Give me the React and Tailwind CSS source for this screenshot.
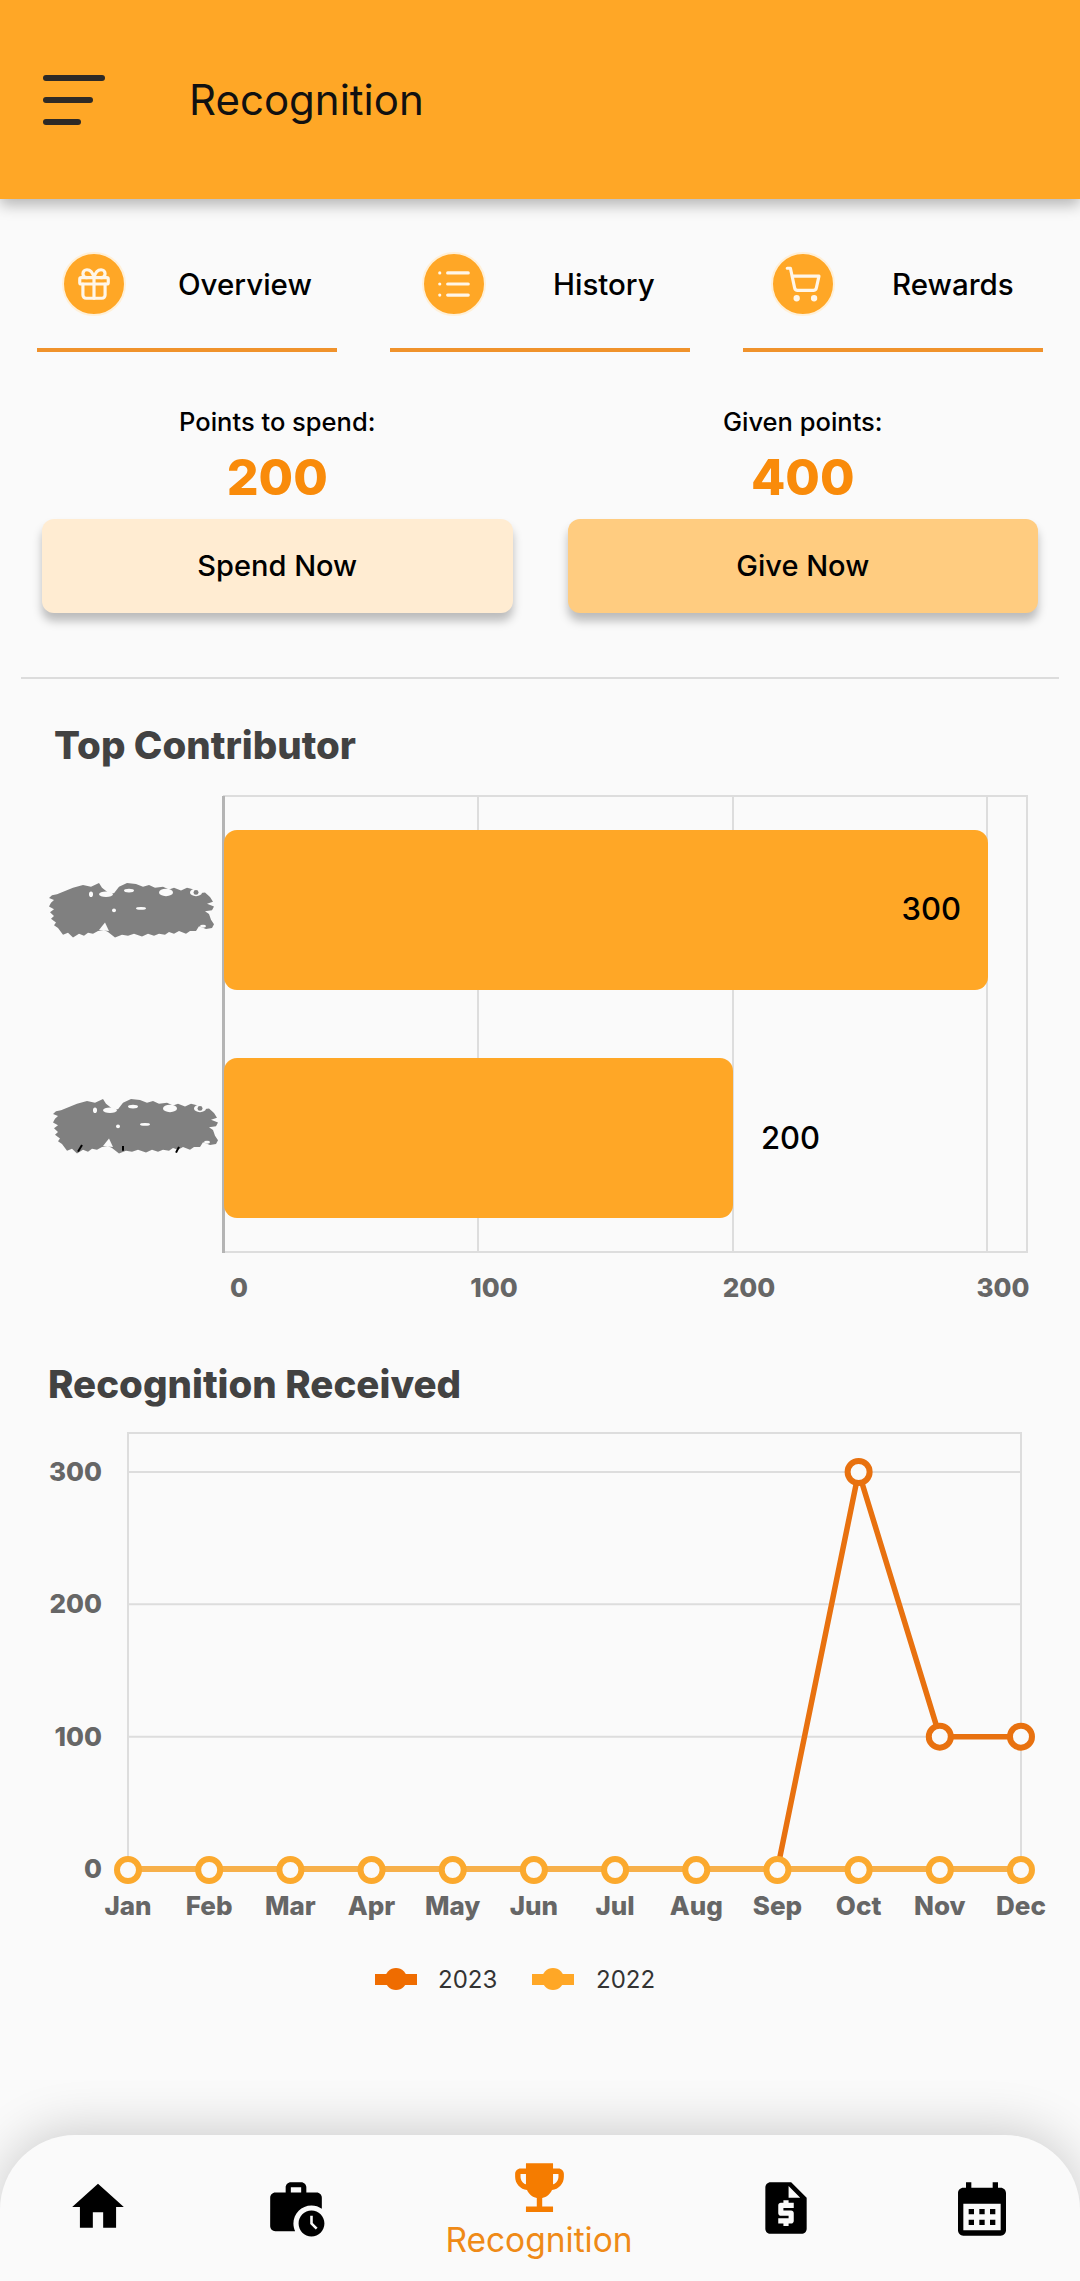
import { Gift, List, ShoppingCart } from "lucide-react";

const tabs = [
  { label: "Overview", Icon: Gift, pad: "pl-[25px]", gap: "ml-[52px]" },
  { label: "History", Icon: List, pad: "pl-[32px]", gap: "ml-[67px]" },
  { label: "Rewards", Icon: ShoppingCart, pad: "pl-[28px]", gap: "ml-[57px]" },
];

const months = ["Jan", "Feb", "Mar", "Apr", "May", "Jun", "Jul", "Aug", "Sep", "Oct", "Nov", "Dec"];
const monthX = (i) => 128 + i * 81.18;
const valueY = (v) => 1869 - (v / 300) * 397;

const series2023 = [0, 0, 0, 0, 0, 0, 0, 0, 0, 300, 100, 100];

function Redacted({ x, y, specks }) {
  return (
    <g transform={`translate(${x} ${y}) scale(1 0.94)`}>
      <path
        fill="#808080"
        d="M6 5l10-3 8 2 8-4 3 5 6 5 6 1 5-7 8-4 9 1 7 3 6-2 6 3 8-1 6 3 5-2 7 3 6-3 7 2 5 4 6-1 5 5 3 5-6 2 7 3-2 4-7 1 4 3 2 6 3 5-2 4-6 1-7-3-3 5-6 0-4 3-7-3-5 3-5-2-4 3-6-1-5 2-6-2-6 3-8-3-6 2-6-1-7 3-7-6-4-2-6 1-5 3-5-1-4 3-5-2-6 4-5-5-5 2-5-7-4-3 2-3-5-4 3-3-4-4 4-3-5-3 2-4 3-3-5-2 3-3 5-1z"
      />
      <g fill="#fafafa">
        <ellipse cx="39" cy="12" rx="7" ry="3" />
        <ellipse cx="62" cy="8" rx="5" ry="2" />
        <ellipse cx="99" cy="10" rx="7" ry="4" />
        <ellipse cx="129" cy="10" rx="6" ry="4" />
        <ellipse cx="147" cy="11" rx="3" ry="2" />
        <ellipse cx="24" cy="12" rx="2" ry="3" />
        <circle cx="47" cy="29" r="2" />
        <ellipse cx="74" cy="27" rx="5" ry="1.5" />
        <ellipse cx="136" cy="46" rx="3" ry="1.5" />
        <path d="M32 50l6-8 4 9z" />
      </g>
      <circle cx="129" cy="10" r="2.5" fill="#808080" />
      {specks}
    </g>
  );
}

function TopContributorChart() {
  const gridX = [478, 733, 987];
  const ticks = [
    ["0", 239],
    ["100", 494],
    ["200", 749],
    ["300", 1003],
  ];
  return (
    <svg viewBox="0 780 1080 530" className="mt-[13px] block h-[530px] w-[1080px] shrink-0">
      <rect x="224" y="796" width="803" height="456" fill="none" stroke="#dddddd" strokeWidth="2" />
      {gridX.map((x) => (
        <line key={x} x1={x} x2={x} y1="796" y2="1252" stroke="#dddddd" strokeWidth="2" />
      ))}
      <line x1="223.5" x2="223.5" y1="796" y2="1253" stroke="#b4b4b4" strokeWidth="3" />
      <rect x="224" y="830" width="764" height="160" rx="13" fill="#ffa726" />
      <rect x="224" y="1058" width="509" height="160" rx="13" fill="#ffa726" />
      <text x="961" y="920" textAnchor="end" fontSize="31" fontWeight="500" fill="#000">300</text>
      <text x="820" y="1149" textAnchor="end" fontSize="31" fontWeight="500" fill="#000">200</text>
      <Redacted x={67} y={883} />
      <Redacted
        x={71}
        y={1099}
        specks={
          <g stroke="#000" strokeWidth="2">
            <line x1="11" y1="49" x2="7" y2="56" />
            <line x1="108" y1="51" x2="105" y2="57" />
            <line x1="52" y1="50" x2="52" y2="55" />
          </g>
        }
      />
      {ticks.map(([t, x]) => (
        <text key={t} x={x} y="1297" textAnchor="middle" fontSize="26" fontWeight="800" fill="#666666">{t}</text>
      ))}
    </svg>
  );
}

function RecognitionChart() {
  const line2023 = series2023.map((v, i) => `${monthX(i)},${valueY(v)}`).join(" ");
  return (
    <svg viewBox="0 1420 1080 590" className="mt-[14px] block h-[590px] w-[1080px] shrink-0">
      <rect x="128" y="1433" width="893" height="436" fill="none" stroke="#dddddd" strokeWidth="2" />
      {[300, 200, 100].map((v) => (
        <g key={v}>
          <line x1="128" x2="1021" y1={valueY(v)} y2={valueY(v)} stroke="#dddddd" strokeWidth="2" />
          <text x="102" y={valueY(v) + 9} textAnchor="end" fontSize="26" fontWeight="800" fill="#666666">{v}</text>
        </g>
      ))}
      <text x="102" y="1878" textAnchor="end" fontSize="26" fontWeight="800" fill="#666666">0</text>
      <polyline points={line2023} fill="none" stroke="#e8710f" strokeWidth="5.5" />
      {series2023.slice(9).map((v, i) => (
        <circle key={i} cx={monthX(i + 9)} cy={valueY(v)} r="11" fill="#fafafa" stroke="#e8710f" strokeWidth="6" />
      ))}
      <line x1="128" x2="1021" y1="1869" y2="1869" stroke="#f7b04a" strokeWidth="6" />
      {months.map((m, i) => (
        <g key={m}>
          <circle cx={monthX(i)} cy="1870" r="11" fill="#fafafa" stroke="#fba92e" strokeWidth="6" />
          <text x={monthX(i)} y="1915" textAnchor="middle" fontSize="26" fontWeight="800" fill="#666666">{m}</text>
        </g>
      ))}
      <rect x="375" y="1974" width="42" height="11" fill="#ef6c00" />
      <circle cx="396" cy="1979" r="11" fill="#ef6c00" />
      <text x="438" y="1988" fontSize="24" fill="#333333">2023</text>
      <rect x="532" y="1974" width="42" height="11" fill="#ffa726" />
      <circle cx="553" cy="1979" r="11" fill="#ffa726" />
      <text x="596" y="1988" fontSize="24" fill="#333333">2022</text>
    </svg>
  );
}

function NavIcon({ size, color = "#000", paths }) {
  return (
    <svg viewBox="0 0 24 24" width={size} height={size} fill={color}>
      {paths.map((d) => (
        <path key={d} d={d} />
      ))}
    </svg>
  );
}

const homePath = "M10 20v-6h4v6h5v-8h3L12 3 2 12h3v8z";
const workHistoryPaths = [
  "M18 11c1.49 0 2.87.47 4 1.26V8c0-1.11-.89-2-2-2h-4V4c0-1.11-.89-2-2-2h-4c-1.11 0-2 .89-2 2v2H4c-1.11 0-1.99.89-1.99 2L2 19c0 1.11.89 2 2 2h7.68c-.43-.91-.68-1.92-.68-3 0-3.87 3.13-7 7-7zM10 4h4v2h-4V4z",
  "M18 13c-2.76 0-5 2.24-5 5s2.24 5 5 5 5-2.24 5-5-2.24-5-5-5zm1.65 7.35L17.5 18.2V15h1v2.79l1.85 1.85-.7.71z",
];
const trophyPath =
  "M19 5h-2V3H7v2H5c-1.1 0-2 .9-2 2v1c0 2.55 1.92 4.63 4.39 4.94.63 1.5 1.98 2.63 3.61 2.96V19H7v2h10v-2h-4v-3.1c1.63-.33 2.98-1.46 3.61-2.96C19.08 12.63 21 10.55 21 8V7c0-1.1-.9-2-2-2zM5 8V7h2v3.82C5.84 10.4 5 9.3 5 8zm14 0c0 1.3-.84 2.4-2 2.82V7h2v1z";
const quotePath =
  "M14 2H6c-1.1 0-1.99.9-1.99 2L4 20c0 1.1.89 2 1.99 2H18c1.1 0 2-.9 2-2V8l-6-6zm1 10h-4v1h3c.55 0 1 .45 1 1v3c0 .55-.45 1-1 1h-1v1h-2v-1H9v-2h4v-1h-3c-.55 0-1-.45-1-1v-3c0-.55.45-1 1-1h1V9h2v1h2v2zm-2-4V3.5L17.5 8H13z";
const calendarPath =
  "M19 4h-1V2h-2v2H8V2H6v2H5c-1.11 0-1.99.9-1.99 2L3 20c0 1.1.89 2 2 2h14c1.1 0 2-.9 2-2V6c0-1.1-.9-2-2-2zm0 16H5V10h14v10zM9 14H7v-2h2v2zm4 0h-2v-2h2v2zm4 0h-2v-2h2v2zm-8 4H7v-2h2v2zm4 0h-2v-2h2v2zm4 0h-2v-2h2v2z";

export default function App() {
  return (
    <div className="flex h-[2281px] w-[1080px] flex-col overflow-hidden bg-[#fafafa] font-['Inter',sans-serif] text-black">
      <header className="relative flex h-[199px] shrink-0 items-center bg-[#ffa726] pl-[43px] shadow-[0_6px_14px_rgba(0,0,0,0.28)]">
        <div className="flex flex-col gap-[16px]">
          <div className="h-[6px] w-[62px] rounded-full bg-[#2e2a26]" />
          <div className="h-[6px] w-[50px] rounded-full bg-[#2e2a26]" />
          <div className="h-[6px] w-[38px] rounded-full bg-[#2e2a26]" />
        </div>
        <h1 className="ml-[84px] text-[42px] leading-[48px] font-normal text-[#111]">Recognition</h1>
      </header>

      <nav className="mt-[53px] grid shrink-0 grid-cols-3 gap-[53px] px-[37px]">
        {tabs.map(({ label, Icon, pad, gap }) => (
          <div key={label}>
            <div className={`flex items-center ${pad}`}>
              <div className="flex size-[64px] items-center justify-center rounded-full border-2 border-[#fff0d8] bg-[#ffa726] text-[#fff6e8]">
                <Icon size={38} strokeWidth={2} />
              </div>
              <span className={`${gap} text-[29.5px] font-medium`}>{label}</span>
            </div>
            <div className="mt-[32px] h-[4px] bg-[#f0922b]" />
          </div>
        ))}
      </nav>

      <section className="mt-[56px] grid shrink-0 grid-cols-2 gap-[55px] pr-[42px] pl-[42px]">
        <div className="text-center">
          <p className="text-[25.5px] leading-[28px] font-medium">Points to spend:</p>
          <p className="mt-[16px] text-[50px] leading-[50px] font-extrabold text-[#f98b0a]">200</p>
          <button className="mt-[17px] h-[94px] w-full rounded-[12px] bg-[#ffecd2] text-[29px] font-medium shadow-[0_8px_10px_rgba(0,0,0,0.25)]">
            Spend Now
          </button>
        </div>
        <div className="text-center">
          <p className="text-[25.5px] leading-[28px] font-medium">Given points:</p>
          <p className="mt-[16px] text-[50px] leading-[50px] font-extrabold text-[#f98b0a]">400</p>
          <button className="mt-[17px] h-[94px] w-full rounded-[12px] bg-[#ffcc80] text-[29px] font-medium shadow-[0_8px_10px_rgba(0,0,0,0.25)]">
            Give Now
          </button>
        </div>
      </section>

      <hr className="mx-[21px] mt-[64px] shrink-0 border-t-2 border-[#dcdcdc]" />

      <h2 className="mt-[44px] shrink-0 pl-[54px] text-[38.5px] leading-[44px] font-extrabold text-[#424242]">Top Contributor</h2>
      <TopContributorChart />

      <h2 className="mt-[52px] shrink-0 pl-[48px] text-[38.5px] leading-[44px] font-extrabold text-[#424242]">Recognition Received</h2>
      <RecognitionChart />

      <footer className="mt-auto grid h-[146px] shrink-0 grid-cols-[196px_199px_288px_206px_186px] rounded-t-[75px] bg-[#fafafa] shadow-[0_-6px_50px_rgba(0,0,0,0.18)]">
        <div className="flex justify-center pt-[41px]">
          <NavIcon size={62} paths={[homePath]} />
        </div>
        <div className="flex justify-center pt-[42px]">
          <NavIcon size={62} paths={workHistoryPaths} />
        </div>
        <div className="flex flex-col items-center pt-[20px]">
          <NavIcon size={65} color="#f57c00" paths={[trophyPath]} />
          <span className="text-[33.5px] leading-[40px] text-[#ef8a17]">Recognition</span>
        </div>
        <div className="flex justify-center pt-[42px]">
          <NavIcon size={62} paths={[quotePath]} />
        </div>
        <div className="flex justify-center pt-[42px]">
          <NavIcon size={64} paths={[calendarPath]} />
        </div>
      </footer>
    </div>
  );
}
